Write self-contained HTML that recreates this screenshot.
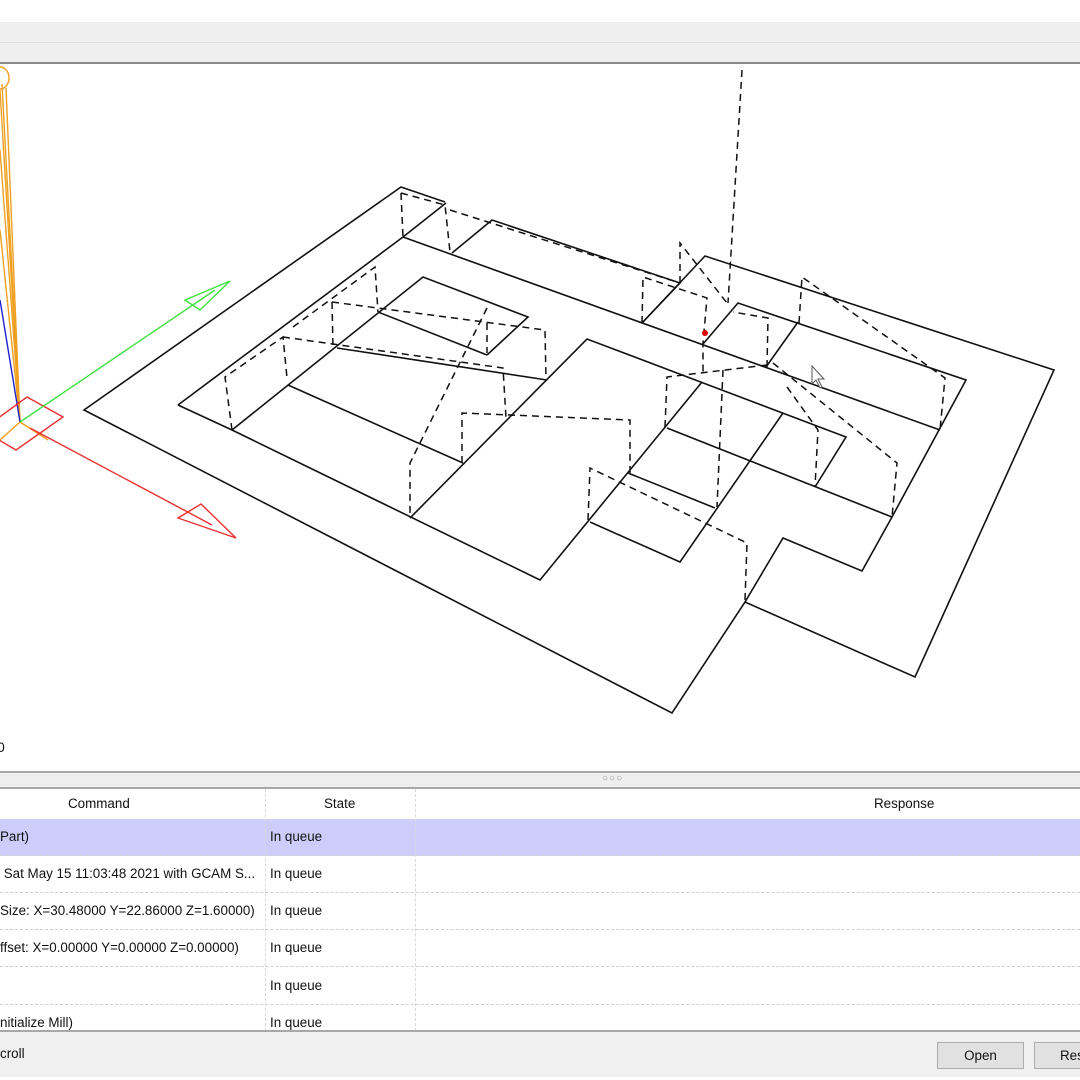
<!DOCTYPE html>
<html><head><meta charset="utf-8"><style>
*{margin:0;padding:0;box-sizing:border-box}
body{width:1080px;height:1080px;overflow:hidden;background:#fff;font-family:"Liberation Sans",sans-serif;font-size:13.4px;color:#111;position:relative}
.a{position:absolute}
.row{position:absolute;left:0;width:1080px;height:37px;border-bottom:1px dashed #d0d0d0}
.row span{position:absolute;top:10px;white-space:nowrap}
.c1{left:0}.c2{left:270px}
.vs{position:absolute;top:789px;height:242px;border-left:1px dashed #d8d8d8}
.btn{position:absolute;top:1042px;height:27px;background:#e1e1e1;border:1px solid #adadad;text-align:center;line-height:25px;font-size:13.4px}
</style></head><body>
<div class="a" style="left:0;top:22px;width:1080px;height:21px;background:#efefef;border-bottom:1px solid #dedede"></div>
<div class="a" style="left:0;top:43px;width:1080px;height:21px;background:#efefef;border-bottom:2px solid #8a8a8a"></div>
<svg class="a" style="left:0;top:0" width="1080" height="771" viewBox="0 0 1080 771">
<g fill="none" stroke-width="1.6">
<g stroke="#f0a020" stroke-width="1.4">
<ellipse cx="0" cy="78" rx="9" ry="11"/>
<line x1="2" y1="84" x2="20" y2="422"/><line x1="0" y1="90" x2="20" y2="422"/>
<line x1="6" y1="88" x2="20" y2="422"/>
<line x1="0" y1="150" x2="20" y2="422"/><line x1="0" y1="230" x2="20" y2="422"/>
<line x1="0" y1="440" x2="20" y2="422"/><line x1="20" y1="422" x2="48" y2="440"/>
</g>
<line x1="0" y1="300" x2="20" y2="422" stroke="#2020d0" stroke-width="1.4"/>
<polygon points="27,397 63,417 16,450 -18,430" stroke="#e83030" stroke-width="1.4"/>
<g stroke="#e83030" stroke-width="1.4"><line x1="30" y1="428" x2="212" y2="525"/><polygon points="178,518 201,504 236,538"/></g>
<g stroke="#40e040" stroke-width="1.4"><line x1="20" y1="422" x2="215" y2="290"/><polygon points="185,300 200,310 230,281"/></g>
<g stroke="#111" stroke-width="1.6">
<polyline points="445,202 401,187 84,410 672,713 745,602 915,677 1054,370 705,256 642,323"/>
<polyline points="178,405 403,237 446,203"/>
<line x1="403" y1="237" x2="940" y2="430"/>
<polyline points="452,253 492,220 680,283 642,323"/>
<polyline points="178,405 232,430 540,580 702,382"/>
<polyline points="703,344 738,303 966,380 892,517 862,571 783,538 745,602"/>
<line x1="798" y1="322" x2="766" y2="367"/>
<polyline points="410,518 587,339 846,437 815,487"/>
<line x1="667" y1="428" x2="892" y2="517"/>
<line x1="628" y1="473" x2="715" y2="508"/>
<polyline points="590,522 680,562 783,413"/>
<polyline points="232,430 423,277 528,317 487,355"/>
<line x1="337" y1="348" x2="547" y2="380"/>
<line x1="378" y1="312" x2="487" y2="355"/>
<line x1="288" y1="385" x2="463" y2="463"/>
</g>
<g stroke="#111" stroke-width="1.5" stroke-dasharray="7,5">
<polyline points="742,70 728,303"/>
<line x1="401" y1="193" x2="403" y2="237"/>
<polyline points="401,193 445,205 450,252"/>
<line x1="450" y1="210" x2="680" y2="283"/>
<polyline points="232,430 225,377 283,337 287,378"/>
<polyline points="283,337 503,368 506,418"/>
<polyline points="293,327 375,267 378,312"/>
<polyline points="332,302 545,330 546,380"/>
<line x1="332" y1="302" x2="333" y2="347"/>
<polyline points="487,308 410,463 410,517"/>
<line x1="487" y1="323" x2="487" y2="353"/>
<polyline points="462,463 462,413 630,420 630,473"/>
<polyline points="588,520 590,468 747,543 745,600"/>
<polyline points="773,363 897,463 892,517"/>
<polyline points="787,387 818,430 815,487"/>
<polyline points="665,427 667,377 767,365"/>
<line x1="723" y1="370" x2="717" y2="507"/>
<polyline points="767,367 768,318 733,312"/>
<polyline points="799,323 802,277 945,378 940,430"/>
<polyline points="680,283 680,243 727,303"/>
<polyline points="642,323 643,277 707,298 703,343 703,373"/>
</g>
</g>
<circle cx="705" cy="333" r="3" fill="#e00000"/>
<path d="M812 366 L812 384 L816 380 L820 388 L822 387 L818 379 L824 379 Z" fill="#fff" stroke="#555" stroke-width="1"/>
<text x="-3" y="752" font-family="Liberation Sans" font-size="14" fill="#111">0</text>
</svg>
<div class="a" style="left:0;top:771px;width:1080px;height:18px;background:#efefef;border-top:2px solid #a8a8a8;border-bottom:2px solid #a8a8a8"></div>
<div class="a" style="left:602px;top:773px;font-size:10px;color:#999;letter-spacing:1px">○○○</div>
<div class="a" style="left:0;top:789px;width:1080px;height:30px;background:#fff"></div>
<div class="a" style="left:68px;top:796px">Command</div>
<div class="a" style="left:324px;top:796px">State</div>
<div class="a" style="left:874px;top:796px">Response</div>
<div class="row" style="top:819px;background:#cdcdfc"><span class="c1">Part)</span><span class="c2">In queue</span></div>
<div class="row" style="top:856px"><span class="c1">&nbsp;Sat May 15 11:03:48 2021 with GCAM S...</span><span class="c2">In queue</span></div>
<div class="row" style="top:893px"><span class="c1">Size: X=30.48000 Y=22.86000 Z=1.60000)</span><span class="c2">In queue</span></div>
<div class="row" style="top:930px"><span class="c1">ffset: X=0.00000 Y=0.00000 Z=0.00000)</span><span class="c2">In queue</span></div>
<div class="row" style="top:968px"><span class="c1"></span><span class="c2">In queue</span></div>
<div class="row" style="top:1005px;border:none"><span class="c1">nitialize Mill)</span><span class="c2">In queue</span></div>
<div class="vs" style="left:265px"></div>
<div class="vs" style="left:415px"></div>
<div class="a" style="left:0;top:1030px;width:1080px;height:50px;background:#f0f0f0;border-top:2px solid #a8a8a8"></div>
<div class="a" style="left:0;top:1046px">croll</div>
<div class="btn" style="left:937px;width:87px">Open</div>
<div class="btn" style="left:1034px;width:60px;text-align:left;padding-left:25px">Reset</div>
<div class="a" style="left:0;top:1077px;width:1080px;height:3px;background:#fff"></div>
</body></html>
